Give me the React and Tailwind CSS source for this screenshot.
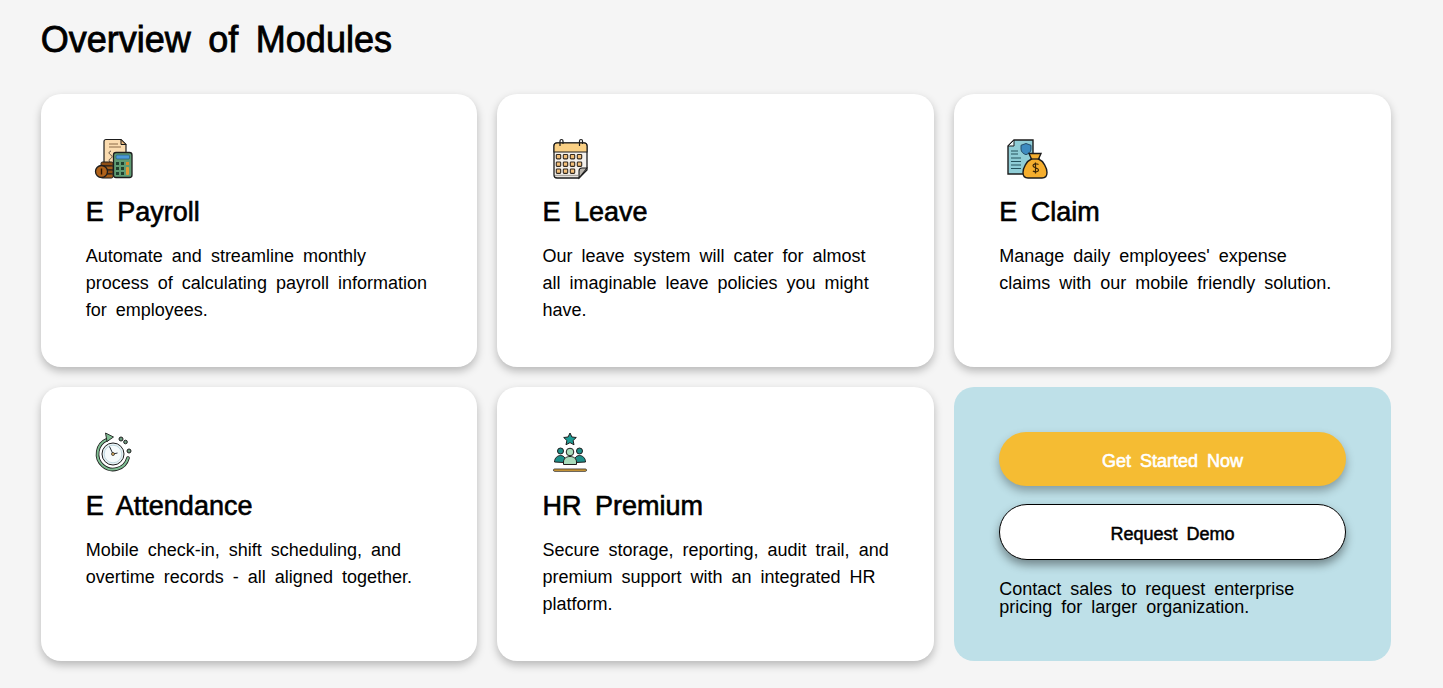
const S = "#1d1d1d";

function Payroll() {
  return (
    <svg width="60" height="44" viewBox="0 0 60 44" className="block">
      <path d="M20 2.5h15l5 5V33H18V4.5a2 2 0 0 1 2-2z" fill="#fbdcb0" stroke={S} strokeWidth="1.2" />
      <path d="M35 2.5v5h5z" fill="#e9b67a" stroke={S} strokeWidth="1" />
      <path d="M23 7h9M23 10h12" stroke="#8a6a48" strokeWidth="1" />
      <path d="M25 14c-3 1-2 3 0 4s1 3-1 4 0 3 1 5" fill="none" stroke="#5a4a3a" strokeWidth="1" />
      <rect x="27.5" y="15.5" width="18.5" height="25" rx="2.5" fill="#5f9c74" stroke={S} strokeWidth="1.3" />
      <rect x="30" y="18" width="13.5" height="4" rx="1" fill="#4c9ad8" stroke="#1f4f70" strokeWidth=".6" />
      <g fill="#20402e">
        <rect x="30" y="25" width="3" height="3" />
        <rect x="35" y="25" width="3" height="3" />
        <rect x="40" y="25" width="3" height="3" fill="#d98a2b" />
        <rect x="30" y="30" width="3" height="3" />
        <rect x="35" y="30" width="3" height="3" />
        <rect x="30" y="35" width="3" height="3" />
        <rect x="35" y="35" width="3" height="3" />
      </g>
      <rect x="40" y="30" width="3" height="8" rx="1" fill="#e09a35" />
      <rect x="15" y="25" width="12" height="4" rx="1.5" fill="#8f4e14" stroke={S} />
      <rect x="15" y="29" width="12" height="4" rx="1.5" fill="#a35c18" stroke={S} />
      <rect x="15" y="33" width="12" height="4" rx="1.5" fill="#8f4e14" stroke={S} />
      <rect x="15" y="37" width="12" height="4" rx="1.5" fill="#a35c18" stroke={S} />
      <circle cx="15.5" cy="34.5" r="6" fill="#b0621a" stroke={S} strokeWidth="1.3" />
      <path d="M15.5 31.5v6" stroke="#241205" strokeWidth="1.4" />
    </svg>
  );
}

function Calendar() {
  const rows = [9.5, 17, 24];
  const cols = [16.5, 23.5, 30.5, 37.5];
  return (
    <svg width="60" height="44" viewBox="0 0 60 44" className="block">
      <path d="M15 6h27a3 3 0 0 1 3 3v24l-8 8H15a3 3 0 0 1-3-3V9a3 3 0 0 1 3-3z" fill="#f4f1ec" stroke={S} strokeWidth="1.3" />
      <path d="M15 6h27a3 3 0 0 1 3 3v6H12V9a3 3 0 0 1 3-3z" fill="#fad084" stroke={S} strokeWidth="1.1" />
      <path d="M18 9V4a1.500 1.500 0 0 1 3 0v3M37.500 9V4a1.500 1.500 0 0 1 3 0v3" fill="none" stroke={S} strokeWidth="1.200" />
      {rows.map((r) =>
        cols.map((c) =>
          r === 24 && c === 37.5 ? null : (
            <rect key={r + "-" + c} x={c - 2.2} y={r + 8} width="4.4" height="4.4" rx=".8" fill="#f3c07a" stroke="#33291f" strokeWidth="1.1" />
          )
        )
      )}
      <path d="M45 31l-8 10v-7a3 3 0 0 1 3-3z" fill="#b9b5ae" stroke={S} strokeWidth="1.1" />
      <path d="M13 38.500h23" stroke="#a8a49c" strokeWidth="1.400" />
    </svg>
  );
}

function Claim() {
  return (
    <svg width="60" height="44" viewBox="0 0 60 44" className="block">
      <path d="M15 3h19v34H9V9z" fill="#8fcdd6" stroke={S} strokeWidth="1.4" />
      <path d="M15 3v6H9z" fill="#e8f5f7" stroke={S} strokeWidth="1" />
      <path d="M27 6.5l5 1.8v3.8c0 2.8-2.2 4.6-5 5.600-2.800-1-5-2.800-5-5.600V8.300z" fill="#3d8bc0" stroke="#1f4560" strokeWidth=".9" />
      <path d="M12 14h7M12 17h7M12 21h10M12 24.500h10M12 28h10M12 31.500h10" stroke="#24525c" strokeWidth="1" />
      <path d="M30 16.500h12l-2.500 5.500c5 2 8.500 9 8.500 13.500 0 3.500-1.500 5.500-5 5.500H29c-3.500 0-5-2-5-5.500 0-4.500 3.500-11.500 8.500-13.500z" fill="#f5ae2e" stroke={S} strokeWidth="1.400" />
      <path d="M31.500 22h9.500" stroke={S} strokeWidth="1.300" />
      <path d="M39.500 27.500c-2.500-1.500-5.500-.5-5.500 1.200 0 2.300 5.500 1.800 5.500 4.300 0 1.800-3.200 2.500-5.600.9M36.500 25.500v11" fill="none" stroke="#3a2508" strokeWidth="1.200" />
    </svg>
  );
}

function Attendance() {
  return (
    <svg width="60" height="44" viewBox="0 0 60 44" className="block">
      <path d="M21 8.700A15.500 15.500 0 1 0 42 27" fill="none" stroke={S} strokeWidth="3.600" strokeLinecap="round" />
      <path d="M21 8.700A15.500 15.500 0 1 0 42 27" fill="none" stroke="#7fbd92" strokeWidth="2" strokeLinecap="round" />
      <path d="M19.500 2l8 4-6.500 4.500z" fill="#7fbd92" stroke={S} strokeWidth=".9" />
      <circle cx="35" cy="8" r="2" fill="#6f9c80" stroke={S} />
      <circle cx="39.500" cy="11" r="1.800" fill="#6f9c80" stroke={S} />
      <circle cx="43" cy="20" r="2" fill="#6f9c80" stroke={S} />
      <circle cx="27" cy="23" r="11" fill="#e8f2f5" stroke={S} strokeWidth="1" />
      <circle cx="27" cy="23" r="8.800" fill="#f6fbfc" stroke="#b5d0d9" strokeWidth=".8" />
      <path d="M27 23l-3.500-7.500M27 23l4.500-1" stroke="#29303a" strokeWidth="1" />
      <circle cx="27" cy="23" r="1.500" fill="#e5b868" stroke={S} strokeWidth=".7" />
    </svg>
  );
}

function Premium() {
  return (
    <svg width="60" height="44" viewBox="0 0 60 44" className="block">
      <path d="M28 2l1.900 4 4.400.5-3.200 3 .9 4.300-4-2.200-4 2.200.9-4.300-3.200-3 4.400-.5z" fill="#1d9c95" stroke={S} strokeWidth="1" />
      <circle cx="18.500" cy="20" r="3" fill="#1d8f8a" stroke={S} />
      <circle cx="37.500" cy="20" r="3" fill="#1d8f8a" stroke={S} />
      <path d="M12.500 31c0-4 3-6.500 6-6.500 2 0 3.500 1 4.500 2.500l-1 4.500z" fill="#1d8f8a" stroke={S} />
      <path d="M43.500 31c0-4-3-6.500-6-6.500-2 0-3.500 1-4.500 2.500l1 4.500z" fill="#1d8f8a" stroke={S} />
      <circle cx="28" cy="21" r="3.800" fill="#a8dcbb" stroke={S} />
      <path d="M21.500 33.500v-2.500c0-3.500 3-5.500 6.500-5.500s6.500 2 6.500 5.500v2.500z" fill="#a8dcbb" stroke={S} />
      <rect x="11.500" y="38" width="33" height="2.300" rx="1.100" fill="#e3a93b" stroke={S} strokeWidth=".8" />
    </svg>
  );
}

const modules = [
  { title: "E Payroll", text: "Automate and streamline monthly process of calculating payroll information for employees.", Icon: Payroll },
  { title: "E Leave", text: "Our leave system will cater for almost all imaginable leave policies you might have.", Icon: Calendar },
  { title: "E Claim", text: "Manage daily employees' expense claims with our mobile friendly solution.", Icon: Claim },
  { title: "E Attendance", text: "Mobile check-in, shift scheduling, and overtime records - all aligned together.", Icon: Attendance },
  { title: "HR Premium", text: "Secure storage, reporting, audit trail, and premium support with an integrated HR platform.", Icon: Premium },
];

function Card({ title, text, Icon }) {
  return (
    <div className="h-[273.4px] rounded-[20px] bg-white px-[45px] pt-[43.5px] shadow-[0_4px_8px_rgba(0,0,0,0.25)]">
      <Icon />
      <h3 className="mt-[15px] text-[27px] leading-[32px] text-black [word-spacing:6px] [-webkit-text-stroke:0.6px_#000]">{title}</h3>
      <p className="mt-[15px] text-[18px] leading-[27px] text-black [word-spacing:4px]">{text}</p>
    </div>
  );
}

export default function App() {
  return (
    <div className="h-[688px] overflow-hidden bg-[#f5f5f5] pl-[40.8px] pr-[52.2px] pt-[18px] font-['Liberation_Sans',Arial,sans-serif] text-black">
      <h1 className="text-[36px] leading-[44px] [word-spacing:7.5px] [-webkit-text-stroke:0.8px_#000]">Overview of Modules</h1>
      <div className="mt-[31.8px] grid grid-cols-3 gap-[20px]">
        {modules.map((m) => (
          <Card key={m.title} {...m} />
        ))}
        <div className="h-[273.4px] rounded-[20px] bg-[#bee0e8] px-[45px] pt-[45px]">
          <button className="block h-[54px] w-full rounded-full bg-[#f5bc33] pt-[4px] text-[18px] text-white [word-spacing:4px] shadow-[0_5px_10px_rgba(0,0,0,0.3)] [-webkit-text-stroke:0.6px_#fff]">Get Started Now</button>
          <button className="mt-[18px] block h-[56px] w-full rounded-full border border-black bg-white pt-[4px] text-[18px] text-black [word-spacing:4px] shadow-[0_5px_10px_rgba(0,0,0,0.4)] [-webkit-text-stroke:0.5px_#000]">Request Demo</button>
          <p className="mt-[20px] text-[18px] leading-[18px] text-black [word-spacing:4px]">Contact sales to request enterprise pricing for larger organization.</p>
        </div>
      </div>
    </div>
  );
}
